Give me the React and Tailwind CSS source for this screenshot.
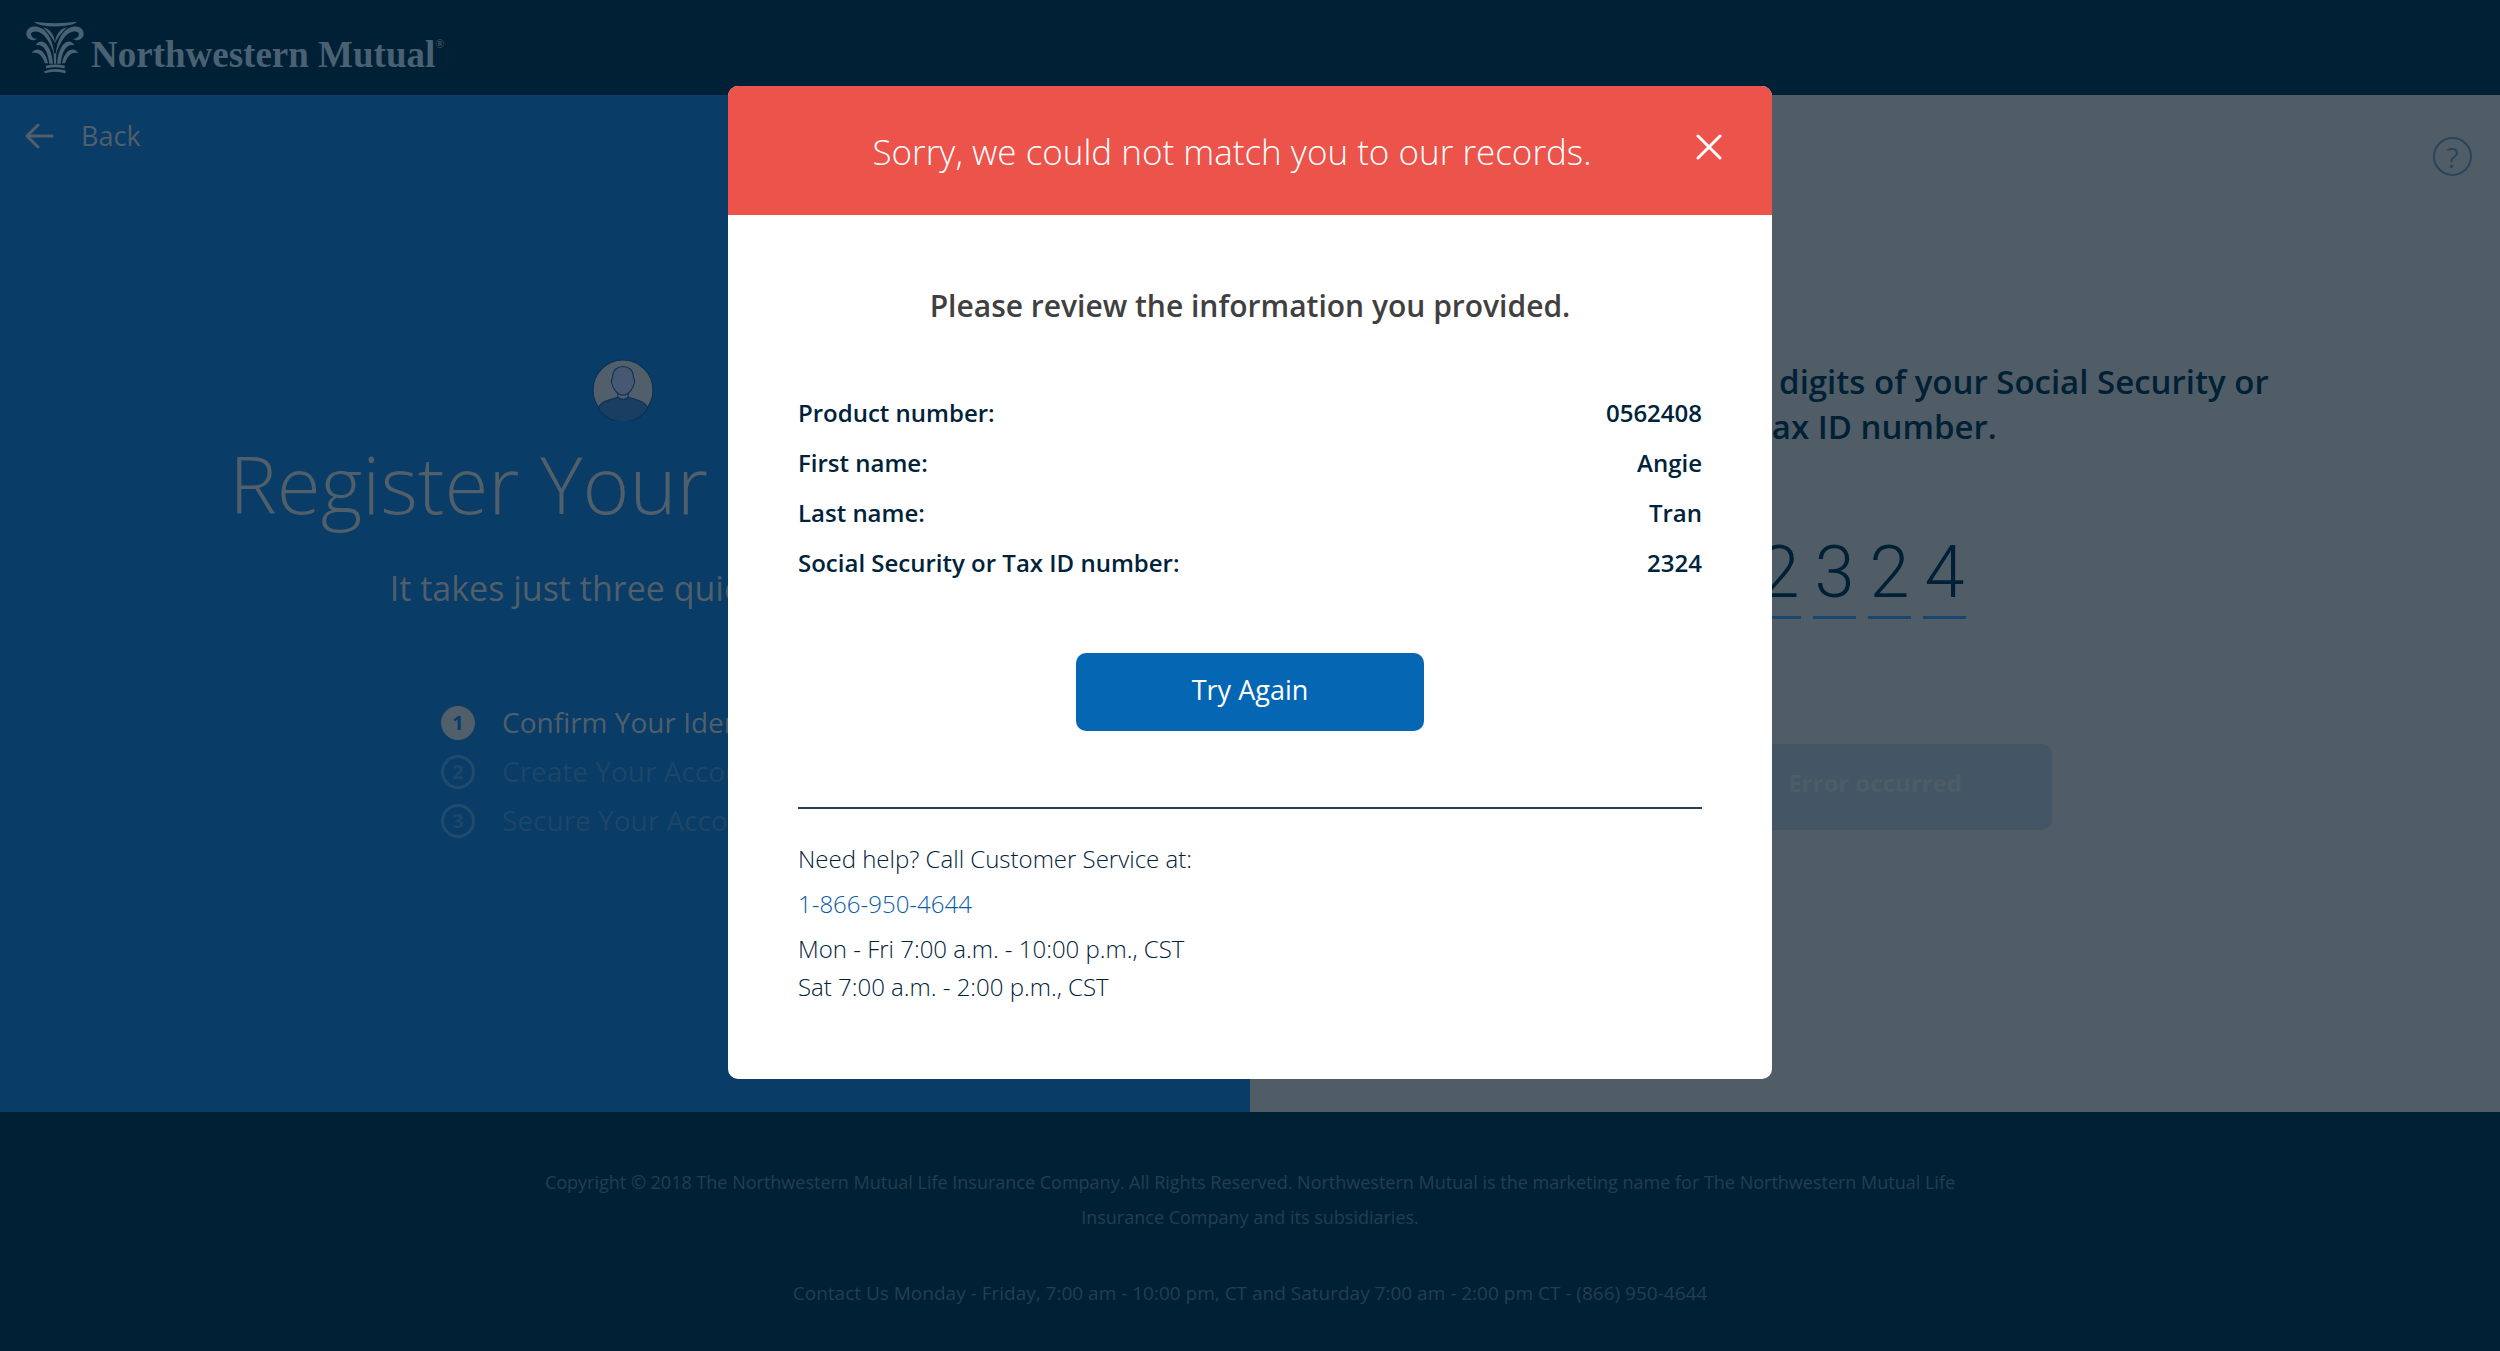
import React, { useState } from "react";

const steps = ["Confirm Your Identity", "Create Your Account", "Secure Your Account"];

const details = [
  { label: "Product number:", value: "0562408" },
  { label: "First name:", value: "Angie" },
  { label: "Last name:", value: "Tran" },
  { label: "Social Security or Tax ID number:", value: "2324" },
];

// Left half of the column capital, mirrored for the right half
function Leaves() {
  return (
    <>
      <path d="M36 52 C30 62 4 58 4 38 C4 22 18 14 34 16 C62 20 84 50 88 102 C76 64 58 34 34 31 C24 30 18 33 18 40 C19 50 30 54 36 52 Z" />
      <path d="M54 18 C74 22 89 40 90 66 C80 46 70 34 54 18 Z" />
      <path d="M32 72 C44 50 78 58 84 128 L73 128 C68 86 54 68 32 72 Z" />
      <path d="M20 96 C32 76 60 82 69 126 L60 126 C50 100 38 92 20 96 Z" />
    </>
  );
}

function Logo() {
  return (
    <svg className="w-[60px] h-[53px]" viewBox="0 0 180 158" fill="currentColor">
      <path d="M26 2 Q90 10 156 2 Q144 15 90 16 Q42 16 26 2 Z" />
      <Leaves />
      <g transform="translate(180 0) scale(-1 1)">
        <Leaves />
      </g>
      <path d="M86 96 H94 L93 128 H87 Z" />
      <path d="M62 134 Q90 126 120 134 L118 142 Q90 135 64 142 Z" />
      <path d="M58 150 Q90 138 122 148 L121 156 Q90 147 59 156 Z" />
    </svg>
  );
}

function Avatar() {
  return (
    <svg className="size-[62px]" viewBox="0 0 60 60" stroke="#0a3055" strokeWidth="1">
      <circle cx="30" cy="30" r="29" fill="#505f69" />
      <path d="M6 48 C8 40 20 39 25 37 L35 37 C40 39 52 40 54 48 A29 29 0 0 1 6 48 Z" fill="#1a3d62" />
      <path d="M25 32 V37 Q30 41 35 37 V32 Z" fill="#505f69" />
      <path d="M20 17 C20 4 40 4 40 17 C40 19 42 20 41 23 C40 28 36 35 30 35 C24 35 20 28 19 23 C18 20 20 19 20 17 Z" fill="#465872" />
    </svg>
  );
}

function Modal({ onClose }) {
  return (
    <div className="absolute inset-0 flex items-start justify-center px-6 pt-[86px]">
      <div role="dialog" aria-labelledby="modal-title" className="w-full max-w-[1044px] rounded-[10px] overflow-hidden bg-white text-[#00233b]">
        {/* Error banner */}
        <div className="flex items-start bg-[#eb534b] text-white pt-[41px] pb-[38px] pr-[50px]">
          <h2 id="modal-title" className="flex-1 pl-[40px] text-center text-[35px] leading-[50px] font-light">
            Sorry, we could not match you to our records.
          </h2>
          <button aria-label="Close" onClick={onClose} className="pt-[7px]">
            <svg className="w-[26px] h-[26px]" viewBox="0 0 26 26" stroke="currentColor" strokeWidth="3" strokeLinecap="round">
              <path d="M2 2 L24 24 M24 2 L2 24" />
            </svg>
          </button>
        </div>

        <div className="px-[70px] pt-[71px] pb-[73px]">
          <h3 className="text-center text-[30px] leading-[40px] font-semibold text-[#404041]">
            Please review the information you provided.
          </h3>

          <dl className="mt-[62px] text-[24px] leading-[50px] font-semibold">
            {details.map((item) => (
              <div key={item.label} className="flex justify-between">
                <dt>{item.label}</dt>
                <dd>{item.value}</dd>
              </div>
            ))}
          </dl>

          <button
            onClick={onClose}
            className="block mx-auto mt-[65px] w-full max-w-[348px] h-[78px] pb-1 rounded-[10px] bg-[#0566b3] text-white text-[27px]"
          >
            Try Again
          </button>

          {/* Contact info */}
          <div className="mt-[76px] pt-[31px] border-t-2 border-[#234259] text-[24px] leading-[38px] font-light">
            <p>Need help? Call Customer Service at:</p>
            <p className="my-[7px]">
              <a href="tel:18669504644" className="text-[#0a5cab]">1-866-950-4644</a>
            </p>
            <p>Mon - Fri 7:00 a.m. - 10:00 p.m., CST</p>
            <p>Sat 7:00 a.m. - 2:00 p.m., CST</p>
          </div>
        </div>
      </div>
    </div>
  );
}

function App() {
  const [open, setOpen] = useState(true);
  const [digits, setDigits] = useState(["2", "3", "2", "4"]);

  const handleDigit = (index, value) => {
    setDigits(digits.map((d, i) => (i === index ? value : d)));
  };

  return (
    <div className="relative min-h-screen flex flex-col bg-[#002135] text-[#505f6a] font-['Open_Sans','Noto_Sans',sans-serif]">
      {/* Top bar */}
      <header className="flex items-start h-[95px] pt-[21px] pl-[25px] gap-[6px] text-[#4a6073]">
        <Logo />
        <div className="flex items-start pt-3 font-['Liberation_Serif',serif]">
          <span className="text-[37px] leading-[44px] font-bold">Northwestern Mutual</span>
          <span className="text-[12px] leading-[14px] pt-1">®</span>
        </div>
      </header>

      <main className="flex-1 grid grid-cols-2">
        {/* Left panel */}
        <section className="bg-[#093c66] flex flex-col items-center">
          <button className="self-start flex items-center gap-[27px] pl-[25px] mt-[21px] text-[27px] leading-[40px]">
            <svg className="w-[29px] h-[26px]" viewBox="0 0 29 26" fill="none" stroke="currentColor" strokeWidth="3" strokeLinecap="round" strokeLinejoin="round">
              <path d="M13 2 L2 13 L13 24 M2 13 H27" />
            </svg>
            Back
          </button>
          <div className="mt-[203px] mr-1">
            <Avatar />
          </div>
          <h1 className="mt-3 text-[80px] leading-[100px] font-light">Register Your Account</h1>
          <p className="mt-[33px] text-[34px] leading-[44px]">It takes just three quick steps.</p>
          <ol className="mt-[88px] w-[368px] text-[28px] leading-[49px]">
            {steps.map((step, i) => (
              <li key={step} className={i === 0 ? "flex items-center gap-[27px]" : "flex items-center gap-[27px] text-[#1d4668]"}>
                <span
                  className={
                    i === 0
                      ? "flex items-center justify-center size-[34px] rounded-full bg-[#505f6a] text-[#093c66] text-[20px] font-bold"
                      : "flex items-center justify-center size-[34px] rounded-full border-3 border-[#214b6e] text-[20px] font-bold"
                  }
                >
                  {i + 1}
                </span>
                <span className="whitespace-nowrap">{step}</span>
              </li>
            ))}
          </ol>
        </section>

        {/* Right panel */}
        <section className="bg-[#505d67] flex flex-col items-center text-[#002135]">
          <button
            aria-label="Help"
            className="self-end flex items-center justify-center mt-[42px] mr-[28px] size-[39px] rounded-full border-2 border-[#29455b] text-[#29455b] text-[28px] leading-none"
          >
            ?
          </button>
          <h2 className="mt-[183px] max-w-[820px] text-center text-[33px] leading-[45px] font-semibold">
            Enter the last four digits of your Social Security or Tax ID number.
          </h2>
          <div className="mt-[81px] mr-[26px] flex gap-3">
            {digits.map((digit, i) => (
              <input
                key={i}
                aria-label={`Digit ${i + 1}`}
                maxLength={1}
                value={digit}
                onChange={(e) => handleDigit(i, e.target.value)}
                className="w-[43px] h-[89px] border-b-3 border-[#17466f] bg-transparent text-center text-[72px] font-light font-['Roboto',sans-serif]"
              />
            ))}
          </div>
          <button disabled className="mt-[125px] w-[354px] h-[86px] pb-2 rounded-[10px] bg-[#445566] text-[#4e5c67] text-[24px] font-bold">
            Error occurred
          </button>
        </section>
      </main>

      <footer className="pt-[53px] pb-[40px] px-6 text-center leading-[35px] text-[#233e52]">
        <p className="max-w-[1480px] mx-auto text-[18px]">
          Copyright © 2018 The Northwestern Mutual Life Insurance Company. All Rights Reserved. Northwestern Mutual is the
          marketing name for The Northwestern Mutual Life Insurance Company and its subsidiaries.
        </p>
        <p className="mt-[41px] text-[19px]">Contact Us Monday - Friday, 7:00 am - 10:00 pm, CT and Saturday 7:00 am - 2:00 pm CT - (866) 950-4644</p>
      </footer>

      {open && <Modal onClose={() => setOpen(false)} />}
    </div>
  );
}

export default App;
